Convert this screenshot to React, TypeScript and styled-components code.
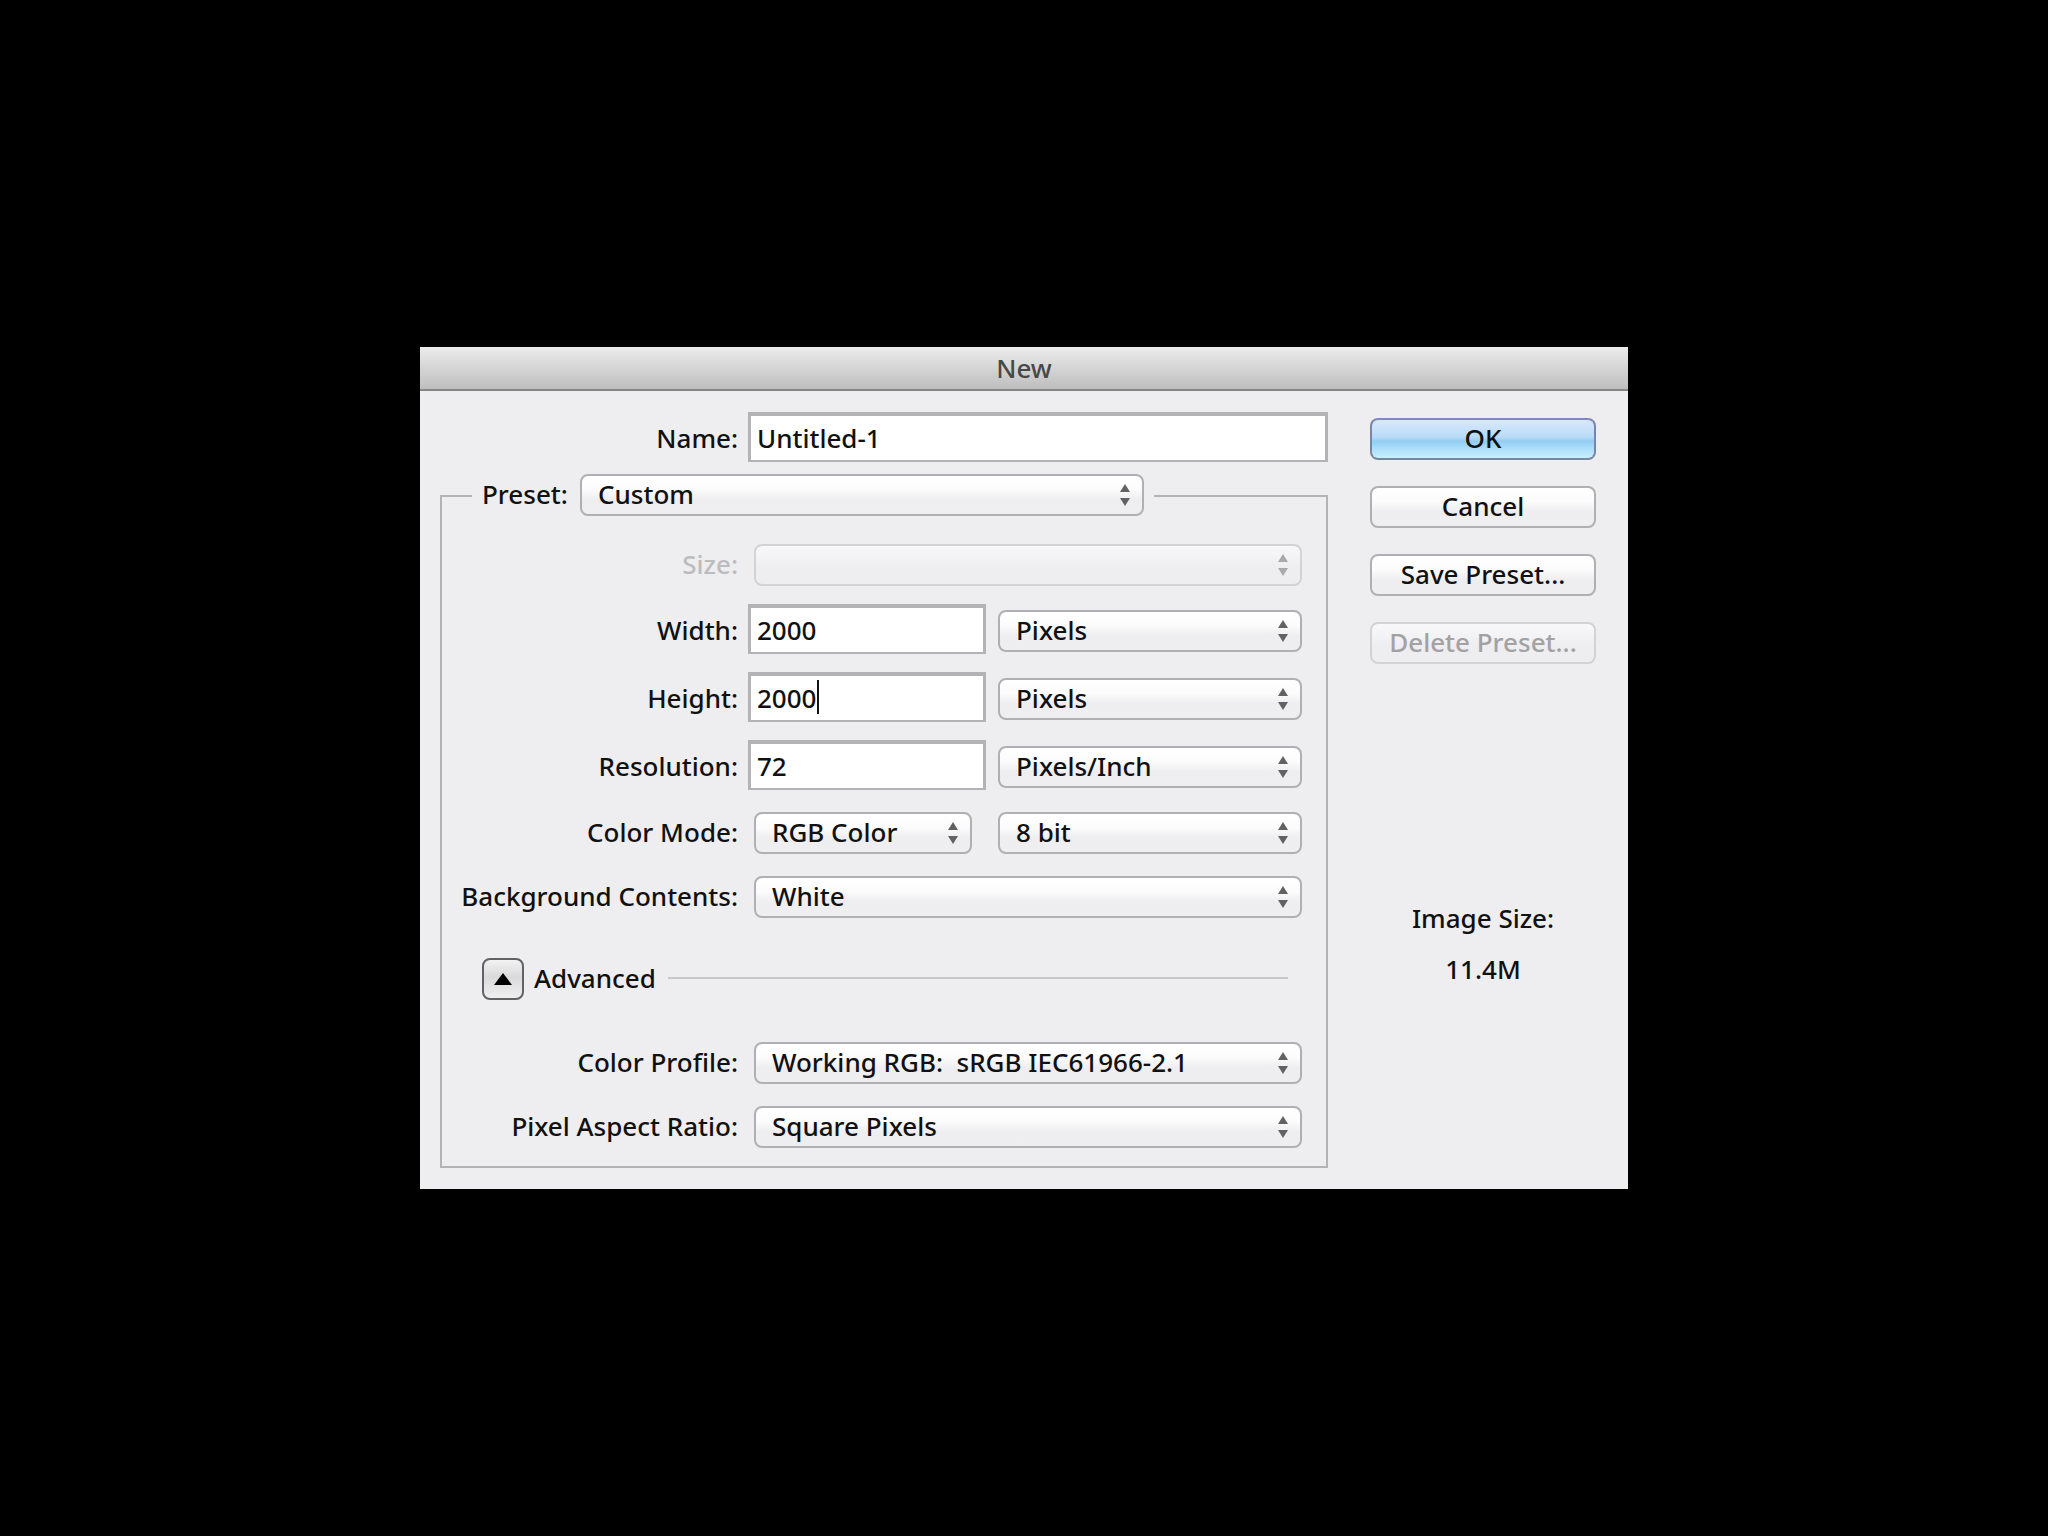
import React, { useState } from 'react';
import styled, { createGlobalStyle, css } from 'styled-components';

const GlobalStyle = createGlobalStyle`
  *, *::before, *::after { box-sizing: border-box; }
  body {
    margin: 0;
    background: #000;
    color: #111;
    font-family: 'Noto Sans', 'Open Sans', sans-serif;
    font-size: 26px;
    font-weight: 500;
    line-height: 34px;
  }
  button, input, select { font: inherit; color: inherit; }
`;

const Screen = styled.main`
  display: flex;
  align-items: center;
  justify-content: center;
  min-height: 100vh;
`;

const Dialog = styled.section`
  width: 100%;
  max-width: 1208px;
  background: #eeedef;
`;

const TitleBar = styled.header`
  display: flex;
  align-items: center;
  justify-content: center;
  height: 44px;
  border-bottom: 2px solid #858585;
  background: linear-gradient(#ececec, #bebebe);
`;

const Title = styled.h1`
  margin: 0;
  font-size: inherit;
  font-weight: inherit;
  color: #484848;
`;

const Body = styled.form`
  display: grid;
  grid-template-columns: minmax(0, 1fr) 226px;
  column-gap: 42px;
  padding: 21px 32px 21px 20px;
`;

const Row = styled.div`
  display: grid;
  grid-template-columns: 296px minmax(0, 1fr);
  column-gap: 10px;
  align-items: center;
`;

const NameRow = styled(Row)`
  padding-left: 2px;
  margin-bottom: 8px;
`;

const Pair = styled.div`
  display: grid;
  grid-template-columns: 238px minmax(0, 1fr);
  column-gap: 6px;
  align-items: center;
`;

const Label = styled.label<{ $disabled?: boolean }>`
  padding-top: 2px;
  text-align: right;
  white-space: nowrap;
  color: ${(p) => (p.$disabled ? '#bcbcbe' : 'inherit')};
`;

const Group = styled.fieldset`
  display: block;
  min-width: 0;
  margin: 0;
  padding: 18px 24px 18px 0;
  border: 2px solid #b3b2b4;
`;

const Legend = styled.legend`
  display: grid;
  grid-template-columns: 92px minmax(0, 1fr);
  align-items: center;
  width: 682px;
  max-width: 90%;
  margin-left: 30px;
  padding: 0 10px 6px;
  ${Label} { text-align: left; }
`;

const Rows = styled.div`
  display: flex;
  flex-direction: column;
  gap: 18px;
`;

const TextBox = styled.input`
  display: block;
  width: 100%;
  height: 50px;
  padding: 0 6px;
  border: solid #b3b2b4;
  border-width: 4px 3px 2px;
  border-radius: 0;
  background: #fff;
  outline: none;
`;

const CaretHost = styled.div`
  position: relative;
`;

const Caret = styled.span`
  position: absolute;
  top: 8px;
  left: calc(10px + 4ch);
  width: 2px;
  height: 34px;
  background: #111;
`;

const control = css`
  height: 42px;
  border: 2px solid #b0afb1;
  border-radius: 8px;
  background: linear-gradient(#fff 0%, #fcfcfd 35%, #eeedef 62%, #efeef0 100%);
  outline: none;
`;

const faded = css`
  border-color: #d3d2d4;
  background: linear-gradient(#f8f7f9, #eeedef 60%);
  opacity: 1;
`;

const SelectBox = styled.div<{ $narrow?: boolean }>`
  position: relative;
  width: ${(p) => (p.$narrow ? '224px' : 'auto')};
  padding: 4px 0 0 6px;
`;

const NativeSelect = styled.select`
  ${control}
  display: block;
  width: 100%;
  padding: 0 36px 2px 16px;
  appearance: none;
  &:disabled { ${faded} }
`;

const Arrows = styled.svg<{ $disabled?: boolean }>`
  position: absolute;
  right: 14px;
  bottom: 10px;
  width: 10px;
  height: 22px;
  fill: ${(p) => (p.$disabled ? '#a9a8aa' : '#626163')};
  pointer-events: none;
`;

const AdvancedRow = styled.div`
  display: flex;
  align-items: center;
  margin: 18px 14px 20px 40px;
  padding-top: 4px;
`;

const Disclosure = styled.button`
  display: grid;
  place-items: center;
  width: 42px;
  height: 42px;
  padding: 0;
  border: 2px solid #626163;
  border-radius: 8px;
  background: linear-gradient(#f2f2f2, #dadada 45%, #efefef);
`;

const AdvancedTitle = styled.span`
  margin-left: 10px;
  padding-bottom: 2px;
`;

const Rule = styled.hr`
  flex: 1;
  height: 2px;
  margin: 0 0 2px 12px;
  border: 0;
  background: #c8c7c9;
`;

const Side = styled.aside`
  display: flex;
  flex-direction: column;
  gap: 26px;
  padding-top: 6px;
`;

const PushButton = styled.button<{ $primary?: boolean }>`
  ${control}
  width: 100%;
  padding: 0 0 2px;
  ${(p) =>
    p.$primary &&
    css`
      border-color: #7f88b8 #7884ac #75879f;
      background: linear-gradient(#d9e8fb 0%, #b9dbf7 45%, #93cdf3 56%, #a9dcfa 72%, #c9f0fc 100%);
    `}
  &:disabled { ${faded} color: #a2a1a3; }
`;

const SizeInfo = styled.dl`
  display: flex;
  flex-direction: column;
  gap: 17px;
  margin: auto 0 0;
  padding-bottom: 182px;
  text-align: center;
`;

const SizeTerm = styled.dt``;

const SizeValue = styled.dd`
  margin: 0;
`;

type SelectProps = {
  id: string;
  options: string[];
  label?: string;
  disabled?: boolean;
  narrow?: boolean;
};

function Select({ id, options, label, disabled, narrow }: SelectProps) {
  return (
    <SelectBox $narrow={narrow}>
      <NativeSelect id={id} aria-label={label} disabled={disabled}>
        {options.map((o) => (
          <option key={o}>{o}</option>
        ))}
      </NativeSelect>
      <Arrows viewBox="0 0 10 22" $disabled={disabled} aria-hidden="true">
        <path d="M5 0 10 8H0ZM0 14H10L5 22Z" />
      </Arrows>
    </SelectBox>
  );
}

export default function App() {
  const [open, setOpen] = useState(true);

  return (
    <>
      <GlobalStyle />
      <Screen>
        <Dialog role="dialog" aria-labelledby="dialog-title">
          <TitleBar>
            <Title id="dialog-title">New</Title>
          </TitleBar>
          <Body onSubmit={(e) => e.preventDefault()}>
            <div>
              <NameRow>
                <Label htmlFor="name">Name:</Label>
                <TextBox id="name" defaultValue="Untitled-1" />
              </NameRow>
              <Group>
                <Legend>
                  <Label htmlFor="preset">Preset:</Label>
                  <Select id="preset" options={['Custom']} />
                </Legend>
                <Rows>
                  <Row>
                    <Label htmlFor="size" $disabled>Size:</Label>
                    <Select id="size" options={['']} disabled />
                  </Row>
                  <Row>
                    <Label htmlFor="width">Width:</Label>
                    <Pair>
                      <TextBox id="width" defaultValue="2000" />
                      <Select id="width-unit" label="Width unit" options={['Pixels']} />
                    </Pair>
                  </Row>
                  <Row>
                    <Label htmlFor="height">Height:</Label>
                    <Pair>
                      <CaretHost>
                        <TextBox id="height" defaultValue="2000" />
                        <Caret />
                      </CaretHost>
                      <Select id="height-unit" label="Height unit" options={['Pixels']} />
                    </Pair>
                  </Row>
                  <Row>
                    <Label htmlFor="resolution">Resolution:</Label>
                    <Pair>
                      <TextBox id="resolution" defaultValue="72" />
                      <Select id="resolution-unit" label="Resolution unit" options={['Pixels/Inch']} />
                    </Pair>
                  </Row>
                  <Row>
                    <Label htmlFor="mode">Color Mode:</Label>
                    <Pair>
                      <Select id="mode" options={['RGB Color']} narrow />
                      <Select id="depth" label="Bit depth" options={['8 bit']} />
                    </Pair>
                  </Row>
                  <Row>
                    <Label htmlFor="background">Background Contents:</Label>
                    <Select id="background" options={['White']} />
                  </Row>
                  <AdvancedRow>
                    <Disclosure
                      type="button"
                      aria-label="Toggle advanced options"
                      aria-expanded={open}
                      onClick={() => setOpen(!open)}
                    >
                      <svg width="18" height="12" viewBox="0 0 18 12" aria-hidden="true">
                        <path d={open ? 'M9 0 18 12H0Z' : 'M0 0H18L9 12Z'} />
                      </svg>
                    </Disclosure>
                    <AdvancedTitle>Advanced</AdvancedTitle>
                    <Rule />
                  </AdvancedRow>
                  {open && (
                    <>
                      <Row>
                        <Label htmlFor="profile">Color Profile:</Label>
                        <Select id="profile" options={['Working RGB:\u00a0 sRGB IEC61966-2.1']} />
                      </Row>
                      <Row>
                        <Label htmlFor="ratio">Pixel Aspect Ratio:</Label>
                        <Select id="ratio" options={['Square Pixels']} />
                      </Row>
                    </>
                  )}
                </Rows>
              </Group>
            </div>
            <Side>
              <PushButton type="submit" $primary>OK</PushButton>
              <PushButton type="button">Cancel</PushButton>
              <PushButton type="button">Save Preset...</PushButton>
              <PushButton type="button" disabled>Delete Preset...</PushButton>
              <SizeInfo>
                <SizeTerm>Image Size:</SizeTerm>
                <SizeValue>11.4M</SizeValue>
              </SizeInfo>
            </Side>
          </Body>
        </Dialog>
      </Screen>
    </>
  );
}
